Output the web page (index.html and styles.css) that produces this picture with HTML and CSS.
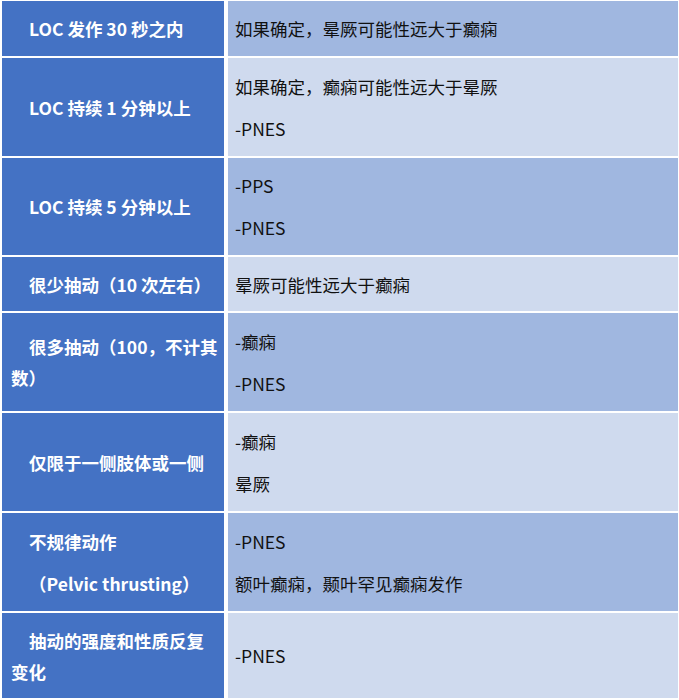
FILE: index.html
```html
<!DOCTYPE html>
<html lang="zh-CN">
<head>
<meta charset="utf-8">
<title>晕厥与癫痫鉴别</title>
<link rel="stylesheet" href="styles.css">
</head>
<body>
<div class="table">
  <div class="cell head"><p>LOC 发作 30 秒之内</p></div>
  <div class="cell body dark"><p>如果确定，晕厥可能性远大于癫痫</p></div>

  <div class="cell head"><p>LOC 持续 1 分钟以上</p></div>
  <div class="cell body light"><p>如果确定，癫痫可能性远大于晕厥</p><p>-PNES</p></div>

  <div class="cell head"><p>LOC 持续 5 分钟以上</p></div>
  <div class="cell body dark"><p>-PPS</p><p>-PNES</p></div>

  <div class="cell head"><p>很少抽动（10 次左右）</p></div>
  <div class="cell body light"><p>晕厥可能性远大于癫痫</p></div>

  <div class="cell head"><p>很多抽动（100，不计其数）</p></div>
  <div class="cell body dark"><p>-癫痫</p><p>-PNES</p></div>

  <div class="cell head"><p>仅限于一侧肢体或一侧</p></div>
  <div class="cell body light"><p>-癫痫</p><p>晕厥</p></div>

  <div class="cell head"><p>不规律动作</p><p>（Pelvic thrusting）</p></div>
  <div class="cell body dark"><p>-PNES</p><p>额叶癫痫，颞叶罕见癫痫发作</p></div>

  <div class="cell head"><p>抽动的强度和性质反复变化</p></div>
  <div class="cell body light"><p>-PNES</p></div>
</div>
</body>
</html>
```

FILE: styles.css
```css
html, body {
  margin: 0;
  padding: 0;
  background: #ffffff;
}

body {
  font-family: "Noto Sans CJK SC", "Microsoft YaHei", sans-serif;
  font-size: 17.5px;
  width: 679px;
}

.table {
  display: grid;
  grid-template-columns: 222px 450px;
  grid-template-rows: 55px 98px 97px 54px 98px 98px 98px 85px;
  column-gap: 4px;
  row-gap: 2px;
  padding: 1px 0 0 2px;
}

.cell {
  display: flex;
  flex-direction: column;
  justify-content: center;
  box-sizing: border-box;
}

.cell p {
  margin: 0;
  line-height: 31px;
}

.cell p + p {
  margin-top: 11px;
}

.head {
  background: #4472c4;
  color: #ffffff;
  font-weight: bold;
  padding: 0 4px 0 9px;
}

.head p {
  text-indent: 18px;
}

.body {
  color: #111111;
  padding: 0 8px 0 7px;
}

.dark {
  background: #a0b7e0;
}

.light {
  background: #cfdaee;
}
```
